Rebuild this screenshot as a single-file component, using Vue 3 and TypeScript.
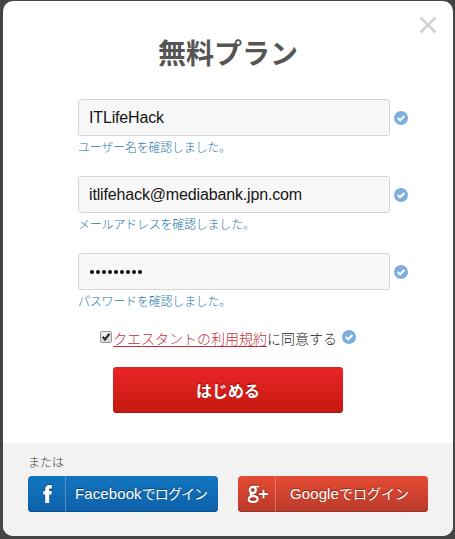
<script setup lang="ts">
import { ref } from 'vue'

interface Field {
  id: string
  type: string
  value: string
  message: string
}

const fields = ref<Field[]>([
  { id: 'name', type: 'text', value: 'ITLifeHack', message: 'ユーザー名を確認しました。' },
  { id: 'mail', type: 'text', value: 'itlifehack@mediabank.jpn.com', message: 'メールアドレスを確認しました。' },
  { id: 'pass', type: 'password', value: '•••••••••', message: 'パスワードを確認しました。' },
])
const agreed = ref(true)
</script>

<template>
  <main class="backdrop">
    <section class="dialog">
      <svg class="close" viewBox="0 0 18 18"><path d="M1.5 1.5 16.5 16.5M16.5 1.5 1.5 16.5" /></svg>
      <h1 class="title">無料プラン</h1>
      <form class="form" @submit.prevent>
        <div v-for="field in fields" :key="field.id" class="field">
          <div class="line">
            <div class="input">
              <span v-if="field.type === 'password'" class="dots">
                <i v-for="(_, n) in field.value.length" :key="n" class="dot"></i>
              </span>
              <span v-else :class="['value', field.id]">{{ field.value }}</span>
            </div>
            <svg class="ok" viewBox="0 0 14 14"><circle cx="7" cy="7" r="7" /><path d="M3.7 7.1 6.1 9.3 10.4 5" /></svg>
          </div>
          <p class="message">{{ field.message }}</p>
        </div>
        <div class="terms">
          <span class="checkbox" @click="agreed = !agreed">
            <svg v-if="agreed" viewBox="0 0 12 12"><path d="M2 5.8 4.8 9 10.2 2" /></svg>
          </span>
          <a class="link">クエスタントの利用規約</a><span>に同意する</span>
          <svg class="ok" viewBox="0 0 14 14"><circle cx="7" cy="7" r="7" /><path d="M3.7 7.1 6.1 9.3 10.4 5" /></svg>
        </div>
        <button class="start" type="submit">はじめる</button>
      </form>
      <footer class="footer">
        <p class="or">または</p>
        <div class="socials">
          <button class="social facebook" type="button">
            <span class="brand">
              <svg viewBox="0 0 36 36" width="36" height="36">
                <path d="M17.2 27V18.4H15.4V14.9H17.2V13.4C17.2 10.2 18.8 9 21.4 9H23.8V12.5H22.4C21.4 12.5 21.2 13 21.2 13.9V14.9H23.8L23.5 18.4H21.2V27Z" fill="#fff" />
              </svg>
            </span>
            <span class="label"><span class="latin">Facebook</span><span class="kana">でログイン</span></span>
          </button>
          <button class="social google" type="button">
            <span class="brand">
              <svg viewBox="0 0 36 36" width="36" height="36" fill="none" stroke="#fff">
                <ellipse cx="14.8" cy="13.9" rx="3" ry="3.1" stroke-width="2.3" />
                <path d="M15.5 10.6H20.8" stroke-width="1.7" />
                <path d="M13.2 17C11.6 18.2 12.6 19.2 14.7 19.6C18 20.2 19.6 21 19.6 22.9C19.6 25 17.6 25.9 14.9 25.9C12.2 25.9 10.7 24.9 10.7 23.2C10.7 21.5 12.2 20.6 14.3 20.3" stroke-width="2.1" />
                <path d="M21.2 18H29.8M25.5 13.7V22.3" stroke-width="1.8" />
              </svg>
            </span>
            <span class="label"><span class="latin">Google</span><span class="kana">でログイン</span></span>
          </button>
        </div>
      </footer>
    </section>
  </main>
</template>

<style>
body {
  background: #444546;
}
</style>

<style scoped>
* {
  box-sizing: border-box;
}
.backdrop {
  height: 539px;
  padding: 1px 2px 3px 3px;
  background: #444546;
  font-family: "Liberation Sans", "Noto Sans CJK JP", sans-serif;
  overflow: hidden;
}
.dialog {
  position: relative;
  display: flex;
  flex-direction: column;
  height: 535px;
  border-radius: 10px;
  background: #fff;
  overflow: hidden;
}
.close {
  position: absolute;
  top: 15px;
  right: 16px;
  width: 18px;
  height: 18px;
  fill: none;
  stroke: #cfd2d6;
  stroke-width: 2.6;
}
.title {
  margin: 31px 0 0;
  height: 41px;
  font: bold 28px/40px "Noto Sans CJK JP", sans-serif;
  color: #555;
  text-align: center;
}
.form {
  display: flex;
  flex-direction: column;
  padding: 26px 0 0 75px;
}
.field {
  height: 77px;
}
.line {
  display: flex;
  align-items: center;
  gap: 4px;
}
.input {
  display: flex;
  align-items: center;
  width: 312px;
  height: 37px;
  padding-left: 10px;
  border: 1px solid #d4d5d7;
  border-radius: 3px;
  background: #f7f7f7;
  color: #151515;
  font-size: 16px;
}
.value {
  letter-spacing: -0.15px;
  white-space: nowrap;
}
.dots {
  display: flex;
  gap: 2px;
  padding-left: 1px;
}
.dot {
  width: 4px;
  height: 4px;
  border-radius: 50%;
  background: #000;
}
.ok {
  flex: none;
  width: 14px;
  height: 14px;
}
.ok circle {
  fill: #7eaedb;
}
.ok path {
  fill: none;
  stroke: #fff;
  stroke-width: 2;
}
.message {
  margin: 2px 0 0;
  font: 300 12px/18px "Noto Sans CJK JP", sans-serif;
  letter-spacing: -0.22px;
  color: #2b78a8;
  white-space: nowrap;
}
.terms {
  display: flex;
  align-items: center;
  height: 22px;
  margin: -3px 0 0 22px;
  font: 300 14px/22px "Noto Sans CJK JP", sans-serif;
  color: #222;
  white-space: nowrap;
}
.terms .ok {
  margin: 0 0 3px 5px;
}
.checkbox {
  display: flex;
  flex: none;
  width: 12px;
  height: 12px;
  margin: 0 1px 2px 0;
  border: 1px solid #999;
  border-radius: 2px;
  background: linear-gradient(#f3f3f3, #dcdcdc);
}
.checkbox svg {
  width: 10px;
  height: 10px;
  fill: none;
  stroke: #333;
  stroke-width: 2.8;
}
.link {
  color: #c52f3d;
  text-decoration: underline;
  text-underline-offset: 2px;
  text-decoration-thickness: 1px;
}
.start {
  width: 230px;
  height: 46px;
  margin: 18px 0 0 35px;
  padding: 0;
  border: 0;
  border-radius: 4px;
  background: linear-gradient(#eb2528, #c5190f);
  box-shadow: inset 0 1px 0 #d7262a, inset 0 -1px 0 #a3170f;
  color: #fff;
  font: bold 16px/46px "Noto Sans CJK JP", sans-serif;
  text-shadow: 0 -1px 1px rgba(90, 0, 0, 0.6);
}
.footer {
  height: 93px;
  margin-top: auto;
  padding: 10px 25px 0;
  background: #f2f2f2;
}
.or {
  margin: 0;
  height: 23px;
  font: 300 12px/18px "Noto Sans CJK JP", sans-serif;
  color: #444;
}
.socials {
  display: flex;
  gap: 20px;
}
.social {
  display: flex;
  width: 190px;
  height: 36px;
  padding: 0;
  border: 0;
  border-radius: 4px;
  color: #fff;
  text-shadow: 0 -1px 1px rgba(0, 0, 0, 0.4);
}
.facebook {
  background: linear-gradient(#1376c0, #0d61a9);
  box-shadow: inset 0 -1px 0 #0b508d;
}
.google {
  background: linear-gradient(#e54b34, #b93b2a);
  box-shadow: inset 0 -1px 0 #963023;
}
.brand {
  width: 38px;
  height: 36px;
  border-right: 1px solid rgba(255, 255, 255, 0.25);
}
.brand svg {
  display: block;
  filter: drop-shadow(0 -1px 1px rgba(0, 0, 0, 0.35));
}
.label {
  display: flex;
  align-items: center;
  padding-left: 9px;
  height: 35px;
  white-space: nowrap;
}
.google .label {
  padding-left: 14px;
}
.latin {
  font: 15px/35px "Liberation Sans", sans-serif;
  letter-spacing: 0.1px;
}
.kana {
  font: 14px/35px "Noto Sans CJK JP", sans-serif;
  letter-spacing: -0.9px;
}
.google .kana {
  letter-spacing: 0;
}
</style>
